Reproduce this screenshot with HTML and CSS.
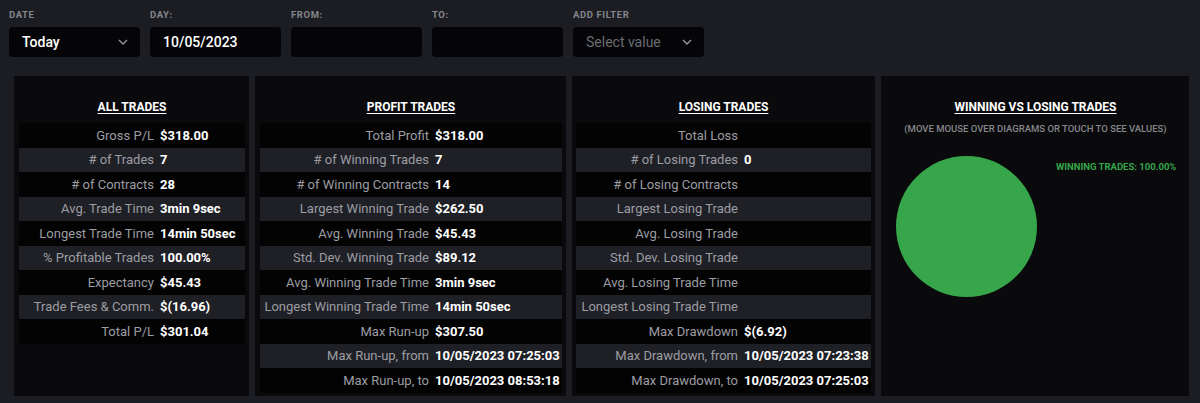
FILE: index.html
```html
<!DOCTYPE html>
<html lang="en">

<head>
    <meta charset="UTF-8">
    <meta name="viewport" content="width=device-width, initial-scale=1.0">
    <title>Trade Statistics</title>
    <link rel="stylesheet" href="styles.css">
</head>

<body>
    <!-- Filters -->
    <div class="filters">
        <div class="filter">
            <label>DATE</label>
            <div class="field select">
                <span>Today</span>
                <svg class="chevron" width="10" height="6" viewBox="0 0 10 6"><path d="M1 1 L5 5 L9 1" fill="none" stroke="#9a9ba0" stroke-width="1.3"/></svg>
            </div>
        </div>
        <div class="filter">
            <label>DAY:</label>
            <div class="field"><span>10/05/2023</span></div>
        </div>
        <div class="filter">
            <label>FROM:</label>
            <div class="field"></div>
        </div>
        <div class="filter">
            <label>TO:</label>
            <div class="field"></div>
        </div>
        <div class="filter">
            <label>ADD FILTER</label>
            <div class="field select">
                <span class="placeholder">Select value</span>
                <svg class="chevron" width="10" height="6" viewBox="0 0 10 6"><path d="M1 1 L5 5 L9 1" fill="none" stroke="#9a9ba0" stroke-width="1.3"/></svg>
            </div>
        </div>
    </div>

    <!-- Statistic panels -->
    <div class="panels">
        <div class="panel all">
            <h3>ALL TRADES</h3>
            <div class="row"><span class="name">Gross P/L</span><span class="val">$318.00</span></div>
            <div class="row"><span class="name"># of Trades</span><span class="val">7</span></div>
            <div class="row"><span class="name"># of Contracts</span><span class="val">28</span></div>
            <div class="row"><span class="name">Avg. Trade Time</span><span class="val">3min 9sec</span></div>
            <div class="row"><span class="name">Longest Trade Time</span><span class="val">14min 50sec</span></div>
            <div class="row"><span class="name">% Profitable Trades</span><span class="val">100.00%</span></div>
            <div class="row"><span class="name">Expectancy</span><span class="val">$45.43</span></div>
            <div class="row"><span class="name">Trade Fees &amp; Comm.</span><span class="val">$(16.96)</span></div>
            <div class="row"><span class="name">Total P/L</span><span class="val">$301.04</span></div>
        </div>

        <div class="panel profit">
            <h3>PROFIT TRADES</h3>
            <div class="row"><span class="name">Total Profit</span><span class="val">$318.00</span></div>
            <div class="row"><span class="name"># of Winning Trades</span><span class="val">7</span></div>
            <div class="row"><span class="name"># of Winning Contracts</span><span class="val">14</span></div>
            <div class="row"><span class="name">Largest Winning Trade</span><span class="val">$262.50</span></div>
            <div class="row"><span class="name">Avg. Winning Trade</span><span class="val">$45.43</span></div>
            <div class="row"><span class="name">Std. Dev. Winning Trade</span><span class="val">$89.12</span></div>
            <div class="row"><span class="name">Avg. Winning Trade Time</span><span class="val">3min 9sec</span></div>
            <div class="row"><span class="name">Longest Winning Trade Time</span><span class="val">14min 50sec</span></div>
            <div class="row"><span class="name">Max Run-up</span><span class="val">$307.50</span></div>
            <div class="row"><span class="name">Max Run-up, from</span><span class="val">10/05/2023 07:25:03</span></div>
            <div class="row"><span class="name">Max Run-up, to</span><span class="val">10/05/2023 08:53:18</span></div>
        </div>

        <div class="panel losing">
            <h3>LOSING TRADES</h3>
            <div class="row"><span class="name">Total Loss</span><span class="val"></span></div>
            <div class="row"><span class="name"># of Losing Trades</span><span class="val">0</span></div>
            <div class="row"><span class="name"># of Losing Contracts</span><span class="val"></span></div>
            <div class="row"><span class="name">Largest Losing Trade</span><span class="val"></span></div>
            <div class="row"><span class="name">Avg. Losing Trade</span><span class="val"></span></div>
            <div class="row"><span class="name">Std. Dev. Losing Trade</span><span class="val"></span></div>
            <div class="row"><span class="name">Avg. Losing Trade Time</span><span class="val"></span></div>
            <div class="row"><span class="name">Longest Losing Trade Time</span><span class="val"></span></div>
            <div class="row"><span class="name">Max Drawdown</span><span class="val">$(6.92)</span></div>
            <div class="row"><span class="name">Max Drawdown, from</span><span class="val">10/05/2023 07:23:38</span></div>
            <div class="row"><span class="name">Max Drawdown, to</span><span class="val">10/05/2023 07:25:03</span></div>
        </div>

        <div class="panel chart">
            <h3>WINNING VS LOSING TRADES</h3>
            <p class="hint">(MOVE MOUSE OVER DIAGRAMS OR TOUCH TO SEE VALUES)</p>
            <div class="chart-body">
                <div class="pie"></div>
                <div class="legend">WINNING TRADES: 100.00%</div>
            </div>
        </div>
    </div>
</body>

</html>
```

FILE: styles.css
```css
body {
    margin: 0;
    padding: 9px 0 0 9px;
    font-family: Roboto, "Liberation Sans", sans-serif;
    background-color: #1c1d22;
    color: #fff;
    height: 394px;
    overflow: hidden;
}

/* top filter bar */
.filters {
    display: flex;
    gap: 10px;
}

.filter label {
    display: block;
    font-size: 9.5px;
    font-weight: 700;
    letter-spacing: 0.6px;
    color: #85868c;
    height: 12px;
    line-height: 12px;
    margin-bottom: 6px;
}

.field {
    width: 131px;
    height: 30px;
    box-sizing: border-box;
    background-color: #050507;
    border-radius: 4px;
    display: flex;
    align-items: center;
    justify-content: space-between;
    padding: 0 12px 0 13px;
    font-size: 14px;
    font-weight: 500;
}

.field .placeholder {
    color: #6c6d72;
    font-weight: 400;
}

.chevron {
    display: block;
}

/* statistic panels */
.panels {
    display: grid;
    grid-template-columns: 235px 311px 303px 308px;
    column-gap: 6px;
    margin: 19px 0 0 5px;
    height: 320px;
}

.panel {
    background-color: #0a0a0c;
    padding: 0 4px 0 5px;
}

.panel h3 {
    margin: 24px 0 8px;
    font-size: 12px;
    font-weight: 700;
    line-height: 15px;
    text-align: center;
    text-decoration: underline;
    text-underline-offset: 2px;
}

.row {
    display: flex;
    height: 24.5px;
    align-items: center;
    font-size: 13px;
    background-color: #030304;
}

.row:nth-of-type(even) {
    background-color: #1f2026;
}

.name {
    flex: 0 0 var(--label-w);
    box-sizing: border-box;
    padding-right: 3px;
    text-align: right;
    color: #9c9da2;
    white-space: nowrap;
}

.val {
    padding-left: 3px;
    font-weight: 700;
    white-space: nowrap;
}

.all { --label-w: 138px; }
.profit { --label-w: 172px; }
.losing { padding-left: 4px; --label-w: 165px; }

/* pie chart panel */
.hint {
    margin: 1px 0 0;
    text-align: center;
    font-size: 9.5px;
    font-weight: 500;
    color: #86878b;
}

.chart-body {
    position: relative;
    height: 200px;
}

.pie {
    position: absolute;
    left: 10px;
    top: 22px;
    width: 141px;
    height: 141px;
    border-radius: 50%;
    background-color: #37a64a;
}

.legend {
    position: absolute;
    left: 170px;
    top: 27px;
    font-size: 9.5px;
    font-weight: 700;
    color: #37a64a;
}
```
